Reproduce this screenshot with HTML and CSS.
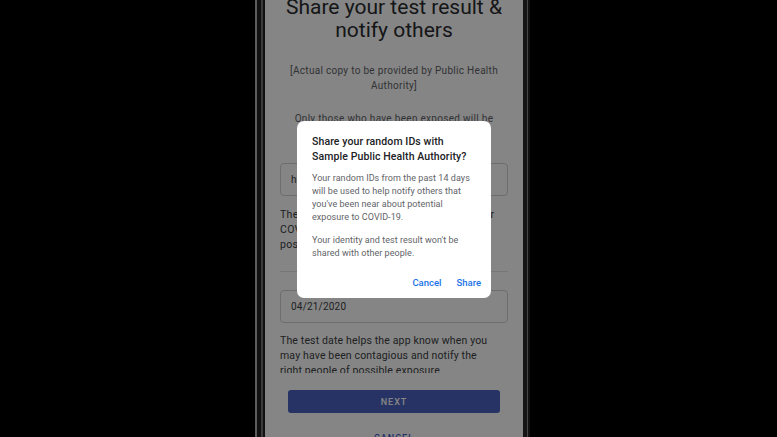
FILE: index.html
```html
<!DOCTYPE html>
<html lang="en">
<head>
<meta charset="utf-8">
<title>Share your test result</title>
<link rel="stylesheet" href="styles.css">
</head>
<body>
<div class="stage">
  <div class="phone">
    <div class="screen">
      <div class="content">
        <h1 class="title">Share your test result &amp; notify others</h1>
        <p class="lead lead-first">[Actual copy to be provided by Public Health Authority]</p>
        <p class="lead lead-second">Only those who have been exposed will be notified of possible exposure.</p>
        <div class="field field-code">health-code</div>
        <p class="help help-first">The verification code confirms your test for<br>COVID-19 and lets you share your<br>positive result.</p>
        <hr class="divider">
        <div class="field field-date">04/21/2020</div>
        <p class="help help-second">The test date helps the app know when you may have been contagious and notify the right people of possible exposure.</p>
      </div>
      <div class="footer">
        <button class="btn-next">NEXT</button>
        <button class="btn-cancel">CANCEL</button>
      </div>
      <div class="scrim"></div>
      <div class="dialog">
        <h2 class="dialog-title">Share your random IDs with<br>Sample Public Health Authority?</h2>
        <p class="dialog-body">Your random IDs from the past 14 days<br>will be used to help notify others that<br>you've been near about potential<br>exposure to COVID-19.</p>
        <p class="dialog-body dialog-body-second">Your identity and test result won't be<br>shared with other people.</p>
        <div class="dialog-actions">
          <button class="dialog-btn">Cancel</button>
          <button class="dialog-btn">Share</button>
        </div>
      </div>
    </div>
  </div>
</div>
</body>
</html>
```

FILE: styles.css
```css
html, body {
  margin: 0;
  padding: 0;
  background: #000;
}

body {
  width: 777px;
  height: 437px;
  overflow: hidden;
  font-family: Roboto, "Noto Sans", "Liberation Sans", sans-serif;
}

.stage {
  display: flex;
  height: 437px;
  padding-left: 255px;
}

.phone {
  box-sizing: border-box;
  width: 275px;
  height: 437px;
  background: #111;
  border-left: 2px solid #5c5c5c;
  padding: 0 7px 0 8px;
  display: flex;
}

.screen {
  position: relative;
  flex: 1;
  height: 437px;
  background: #fff;
  display: flex;
  flex-direction: column;
  overflow: hidden;
  box-shadow: -2px 0 0 #111, -4px 0 0 #3c3c3c, 4px 0 0 #151515, 5px 0 0 #474747;
}

.content {
  flex: 0 0 373px;
  height: 373px;
  overflow: hidden;
  padding: 0 15px;
  box-sizing: border-box;
  color: #3c4043;
}

.title {
  margin: -4px 0 0;
  font-size: 21px;
  line-height: 23px;
  font-weight: 400;
  text-align: center;
  color: #2a2b2e;
}

.lead {
  margin: 22px 0 0;
  font-size: 10px;
  line-height: 14.5px;
  letter-spacing: 0.3px;
  text-align: center;
  color: #5f6368;
}

.lead-second {
  margin-top: 19px;
}

.field {
  box-sizing: border-box;
  height: 33px;
  border: 1px solid #cfd1d4;
  border-radius: 4px;
  display: flex;
  align-items: center;
  padding-left: 10px;
  font-size: 10px;
  line-height: 12px;
  letter-spacing: 0.2px;
  color: #3c4043;
}

.field-code {
  margin-top: 22px;
}

.field-date {
  margin-top: 18px;
}

.help {
  margin: 11px 0 0;
  font-size: 10.5px;
  line-height: 15px;
  letter-spacing: 0.15px;
  color: #3c4043;
}

.help-first {
  letter-spacing: 0.3px;
}

.help-second {
  margin: 10px 18px 0 0;
}

.divider {
  margin: 19px 0 0;
  border: 0;
  border-top: 1px solid #e3e3e3;
}

.footer {
  flex: 1;
  background: #fff;
  display: flex;
  flex-direction: column;
  align-items: center;
  padding-top: 17px;
}

.btn-next {
  width: 212px;
  height: 23px;
  border: 0;
  border-radius: 3px;
  background: #4a62c0;
  color: #fff;
  font-family: inherit;
  font-size: 9px;
  font-weight: 500;
  letter-spacing: 1px;
  padding: 0;
}

.btn-cancel {
  margin-top: 20px;
  border: 0;
  background: transparent;
  color: #3f5bc4;
  font-family: inherit;
  font-size: 9px;
  font-weight: 500;
  letter-spacing: 1px;
  padding: 0;
}

.scrim {
  position: absolute;
  inset: 0;
  background: rgba(0, 0, 0, 0.48);
}

.dialog {
  position: absolute;
  left: 32px;
  top: 121px;
  width: 194px;
  box-sizing: border-box;
  background: #fff;
  border-radius: 7px;
  padding: 12.5px 10px 9px 15px;
}

.dialog-title {
  margin: 0;
  font-size: 10.5px;
  line-height: 15px;
  font-weight: 500;
  letter-spacing: 0.1px;
  color: #202124;
}

.dialog-body {
  margin: 8px 0 0;
  font-size: 9px;
  line-height: 13px;
  letter-spacing: 0.05px;
  white-space: nowrap;
  color: #5f6368;
}

.dialog-body-second {
  margin-top: 10px;
}

.dialog-actions {
  display: flex;
  justify-content: flex-end;
  gap: 15px;
  margin-top: 17px;
}

.dialog-btn {
  border: 0;
  background: transparent;
  padding: 0;
  font-family: inherit;
  font-size: 9.5px;
  line-height: 12px;
  font-weight: 500;
  color: #1a73e8;
}
```
